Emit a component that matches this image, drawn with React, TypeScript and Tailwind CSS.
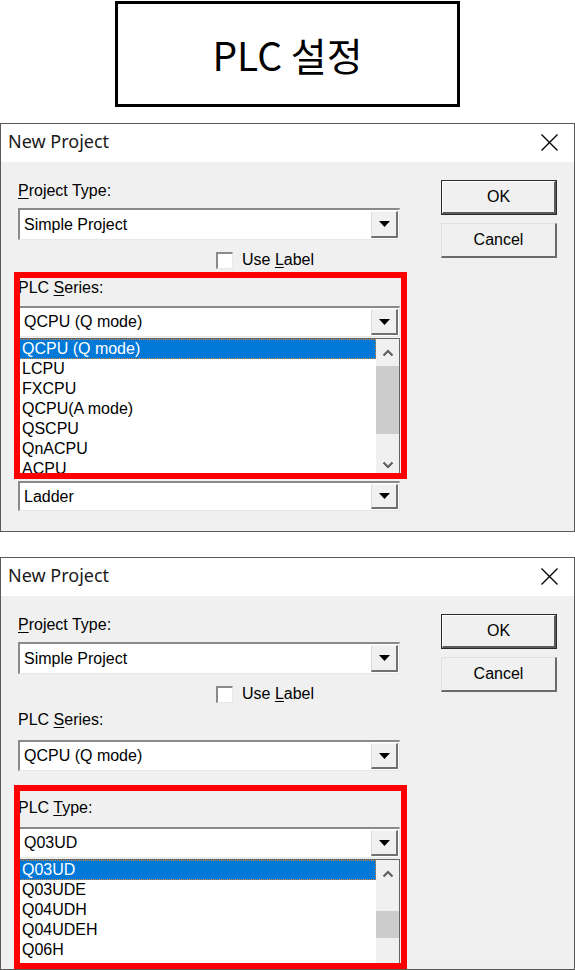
import React from "react";

const SANS = "font-['Liberation_Sans',Arial,sans-serif]";

function Triangle() {
  return (
    <svg width="11" height="6" viewBox="0 0 11 6">
      <path d="M0 0H11L5.5 6Z" fill="#000" />
    </svg>
  );
}

function Combo({ value, hClass }: { value: string; hClass: string }) {
  return (
    <div
      className={`flex ${hClass} w-full bg-white border-t-2 border-l-2 border-t-[#8a8a8a] border-l-[#8a8a8a] border-b border-r border-b-[#e8e8e8] border-r-[#e8e8e8]`}
    >
      <div className="flex flex-1 items-center pl-[4px] text-[16px] text-black">{value}</div>
      <div className="my-[1px] mr-[1px] flex w-[27px] items-center justify-center bg-[#f0f0f0] border-t border-l border-t-[#f8f8f8] border-l-[#dcdcdc] border-b-2 border-r-2 border-b-[#707070] border-r-[#707070]">
        <Triangle />
      </div>
    </div>
  );
}

function Chevron({ up }: { up: boolean }) {
  return (
    <svg width="12" height="8" viewBox="0 0 12 8">
      <path
        d={up ? "M1.5 6.5L6 2L10.5 6.5" : "M1.5 1.5L6 6L10.5 1.5"}
        fill="none"
        stroke="#606060"
        strokeWidth="2.2"
      />
    </svg>
  );
}

function ListBox({
  items,
  hClass,
  thumbClass,
  showDown,
}: {
  items: string[];
  hClass: string;
  thumbClass: string;
  showDown: boolean;
}) {
  return (
    <div className={`flex ${hClass} w-full overflow-hidden bg-white border border-[#646464]`}>
      <div className="flex flex-1 flex-col">
        {items.map((it, i) => (
          <div
            key={it}
            className={
              i === 0
                ? "h-[20px] shrink-0 bg-[#0078d7] pl-[3px] text-[16px] leading-[20px] text-white outline-1 outline-dotted outline-[#d08a40] -outline-offset-1"
                : "h-[20px] shrink-0 pl-[3px] text-[16px] leading-[20px] text-black"
            }
          >
            {it}
          </div>
        ))}
      </div>
      <div className="flex w-[23px] flex-col bg-[#f0f0f0]">
        <div className="flex h-[27px] shrink-0 items-center justify-center">
          <Chevron up={true} />
        </div>
        <div className="flex-1">
          <div className={`w-full bg-[#cdcdcd] ${thumbClass}`} />
        </div>
        {showDown && (
          <div className="flex h-[27px] shrink-0 items-center justify-center">
            <Chevron up={false} />
          </div>
        )}
      </div>
    </div>
  );
}

function TitleBar() {
  return (
    <div className="flex h-[38px] shrink-0 items-center justify-between bg-white pb-[4px] pl-[7px] pr-[16px]">
      <span className="font-['Noto_Sans',sans-serif] text-[18px] text-[#1a1a1a]">New Project</span>
      <svg width="17" height="17" viewBox="0 0 17 17" className="mt-[3px]">
        <path d="M0.5 0.5L16.5 16.5M16.5 0.5L0.5 16.5" stroke="#000" strokeWidth="1.3" />
      </svg>
    </div>
  );
}

function Buttons() {
  return (
    <div className="ml-[41px] mt-[18px] flex flex-col gap-[8px]">
      <div className="h-[35px] w-[116px] border border-[#2a2a2a]">
        <div className="flex h-full w-full items-center justify-center bg-[#f0f0f0] text-[16px] text-black border-t border-l border-t-white border-l-white border-b-2 border-r-2 border-b-[#5a5a5a] border-r-[#5a5a5a]">
          OK
        </div>
      </div>
      <div className="flex h-[35px] w-[116px] items-center justify-center bg-[#f0f0f0] text-[16px] text-black border-t border-l border-t-[#e0e0e0] border-l-[#e0e0e0] border-b-2 border-r-2 border-b-[#6a6a6a] border-r-[#6a6a6a]">
        Cancel
      </div>
    </div>
  );
}

function Label({ pre, u, post }: { pre: string; u: string; post: string }) {
  return (
    <div className="h-[20px] text-[16px] leading-[20px] text-black">
      {pre}
      <span className="underline underline-offset-[2px]">{u}</span>
      {post}
    </div>
  );
}

function CheckRow() {
  return (
    <div className="flex h-[20px] items-center pl-[198px]">
      <div className="h-[17px] w-[17px] bg-white border-t-2 border-l-2 border-t-[#8a8a8a] border-l-[#8a8a8a] border-b border-r border-b-[#e8e8e8] border-r-[#e8e8e8]" />
      <div className="ml-[9px] text-[16px] leading-[20px] text-black">
        Use <span className="underline underline-offset-[2px]">L</span>abel
      </div>
    </div>
  );
}

export default function App() {
  return (
    <div className={`flex w-[575px] flex-col bg-white ${SANS}`}>
      <div className="mx-auto mt-[1px] flex h-[106px] w-[345px] items-center justify-center border-[3px] border-black">
        <span className="font-['Noto_Sans_CJK_KR',sans-serif] text-[39px] text-black">PLC 설정</span>
      </div>

      {/* Dialog 1 */}
      <div className="relative mt-[16px] flex w-full flex-col border border-[#5a5a5a]">
        <TitleBar />
        <div className="flex bg-[#f0f0f0] pb-[20px]">
          <div className="ml-[17px] flex w-[382px] flex-col pt-[19px]">
            <Label pre="" u="P" post="roject Type:" />
            <div className="mt-[7px]">
              <Combo value="Simple Project" hClass="h-[32px]" />
            </div>
            <div className="mt-[10px]">
              <CheckRow />
            </div>
            <div className="mt-[8px]">
              <Label pre="PLC " u="S" post="eries:" />
            </div>
            <div className="mt-[8px]">
              <Combo value="QCPU (Q mode)" hClass="h-[31px]" />
            </div>
            <div className="mt-[1px]">
              <ListBox
                items={["QCPU (Q mode)", "LCPU", "FXCPU", "QCPU(A mode)", "QSCPU", "QnACPU", "ACPU"]}
                hClass="h-[141px]"
                thumbClass="h-[68px]"
                showDown={true}
              />
            </div>
            <div className="mt-[2px]">
              <Combo value="Ladder" hClass="h-[30px]" />
            </div>
          </div>
          <Buttons />
        </div>
        <div className="pointer-events-none absolute left-[13px] top-[148px] h-[207px] w-[393px] border-[6px] border-[#ff0000]" />
      </div>

      {/* Dialog 2 */}
      <div className="relative mt-[25px] flex h-[413px] w-full flex-col overflow-hidden border border-[#5a5a5a]">
        <TitleBar />
        <div className="flex min-h-0 flex-1 bg-[#f0f0f0]">
          <div className="ml-[17px] flex w-[382px] flex-col pt-[19px]">
            <Label pre="" u="P" post="roject Type:" />
            <div className="mt-[7px]">
              <Combo value="Simple Project" hClass="h-[32px]" />
            </div>
            <div className="mt-[10px]">
              <CheckRow />
            </div>
            <div className="mt-[6px]">
              <Label pre="PLC " u="S" post="eries:" />
            </div>
            <div className="mt-[10px]">
              <Combo value="QCPU (Q mode)" hClass="h-[31px]" />
            </div>
            <div className="mt-[27px]">
              <Label pre="PLC " u="T" post="ype:" />
            </div>
            <div className="mt-[9px]">
              <Combo value="Q03UD" hClass="h-[31px]" />
            </div>
            <div className="mt-[1px]">
              <ListBox
                items={["Q03UD", "Q03UDE", "Q04UDH", "Q04UDEH", "Q06H"]}
                hClass="h-[141px]"
                thumbClass="mt-[24px] h-[27px]"
                showDown={false}
              />
            </div>
          </div>
          <Buttons />
        </div>
        <div className="pointer-events-none absolute left-[13px] top-[227px] h-[184px] w-[393px] border-[6px] border-[#ff0000]" />
      </div>
    </div>
  );
}
